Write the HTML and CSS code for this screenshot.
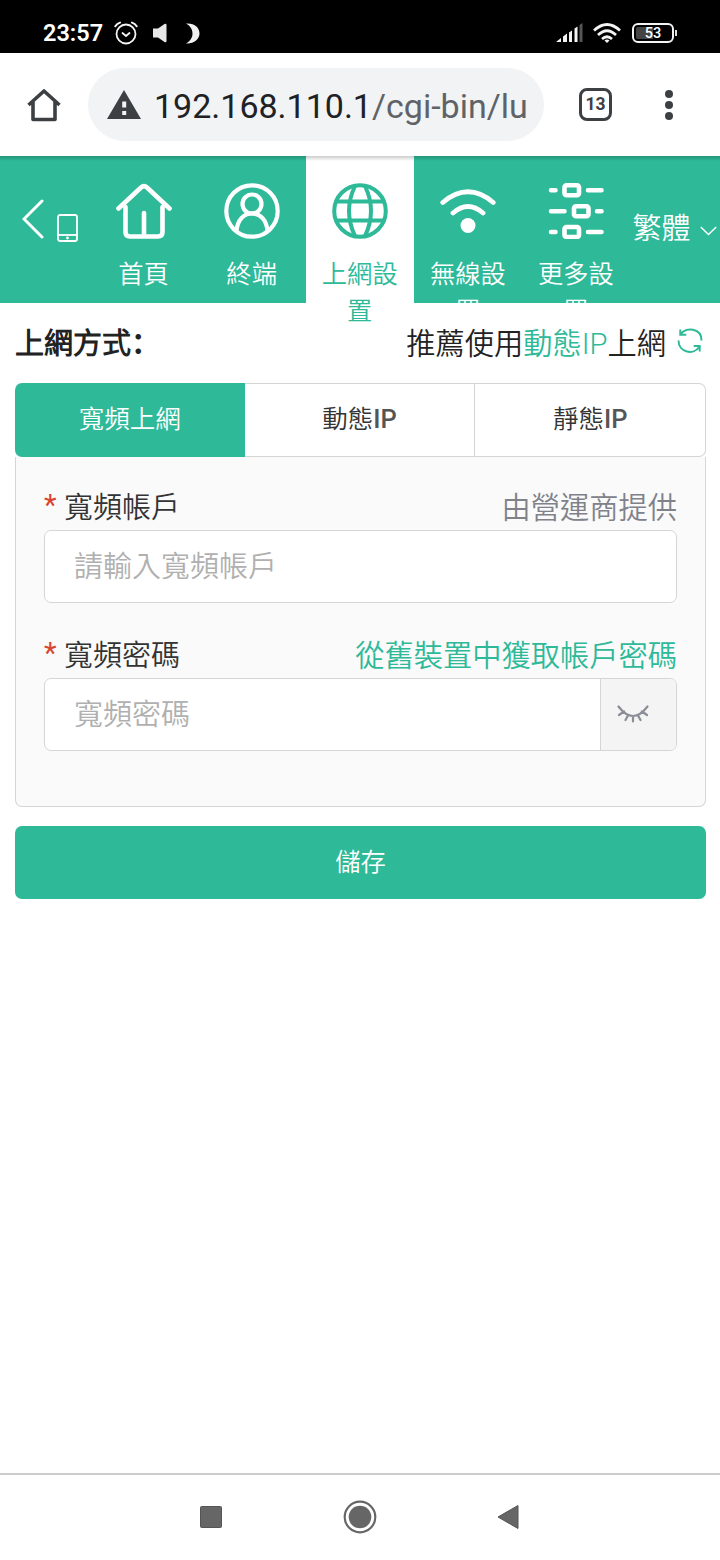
FILE: index.html
```html
<!DOCTYPE html>
<html lang="zh-Hant">
<head>
    <meta charset="UTF-8">
    <meta name="viewport" content="width=device-width, initial-scale=1.0">
    <title>上網設置</title>
    <link rel="stylesheet" href="styles.css">
</head>
<body>

    <div class="statusbar">
        <span class="clock">23:57</span>
        <svg class="alarm" width="24" height="24" viewBox="0 0 24 24" fill="none" stroke="#f4f4f4" stroke-width="1.8" stroke-linecap="round">
            <circle cx="12" cy="13" r="9.5"/>
            <path d="M8.5 12l3.5 3 3.5-3"/>
            <path d="M1.3 5.2Q3 2.5 6 1.6M22.7 5.2Q21 2.5 18 1.6" stroke-width="2"/>
        </svg>
        <svg class="sound" width="14" height="20" viewBox="0 0 14 20" fill="#e8e8e8"><path d="M0 5.500h5L11.500 1Q13.500 0 13.500 2v16q0 2-2 1L5 14.500H0z"/></svg>
        <svg class="moon" width="14" height="21" viewBox="0 0 14 21" fill="#f0f0f0"><path d="M0 .5C9 0 13.500 5 13.500 10.500S8 21 0 20.500C4.500 18 6.500 14.500 6.500 10.500S4.500 3 0 .5z"/></svg>
        <span class="spacer"></span>
        <svg class="signal" width="27" height="20" viewBox="0 0 27 20" fill="#f4f4f4">
            <path d="M0 19l5-4v4zM7 13.500l4-3V19H7zM13 9.500l3-2V19h-3zM18.500 5.500l3-2V19h-3z"/>
            <path d="M23.500 2l3-2v19h-3z" fill="#555"/>
        </svg>
        <svg class="wifi" width="28" height="20" viewBox="0 0 28 20" fill="none" stroke="#f4f4f4" stroke-width="2.7">
            <path d="M1 7.500Q14-4.500 27 7.500M5 12q9-8.500 18 0M9 16q5-4.500 10 0"/>
            <path d="M11.500 17.500q2.500-2 5 0L14 20z" fill="#f4f4f4" stroke="none"/>
        </svg>
        <div class="battery"><span>53</span></div>
    </div>

    <div class="browser">
        <svg class="home" width="34" height="34" viewBox="0 0 34 34" fill="none" stroke="#3c4043" stroke-width="3.600" stroke-linejoin="round">
            <path d="M1.500 17L17 3l15.500 14M6 14v17.500h22V14"/>
        </svg>
        <div class="url">
            <svg width="34" height="29" viewBox="0 0 34 29"><path d="M17 0l17 29H0z" fill="#3c4043"/><path d="M15.200 11.500h4v6h-4zM15.200 21h4v4h-4z" fill="#f1f3f4"/></svg>
            <span class="address">192.168.110.1<span class="path">/cgi-bin/lu</span></span>
        </div>
        <div class="tabcount">13</div>
        <svg class="dots" width="8" height="30" viewBox="0 0 8 30" fill="#3c4043"><circle cx="4" cy="4" r="4"/><circle cx="4" cy="15" r="4"/><circle cx="4" cy="26" r="4"/></svg>
    </div>

    <div class="nav">
        <div class="back">
            <svg width="22" height="40" viewBox="0 0 22 40" fill="none" stroke="#fff" stroke-width="3" stroke-linecap="round"><path d="M20 2L2 20l18 18"/></svg>
            <svg class="phone" width="21" height="28" viewBox="0 0 21 28" fill="none" stroke="#fff" stroke-width="1.800"><rect x="1" y="1" width="19" height="26" rx="2"/><path d="M1 21h19"/><circle cx="10.500" cy="24" r="1.400" fill="#fff" stroke="none"/></svg>
        </div>
        <div class="nav-item">
            <svg width="56" height="56" viewBox="0 0 56 56" fill="none" stroke="currentColor" stroke-width="4.600" stroke-linecap="round" stroke-linejoin="round">
                <path d="M2.500 25.500L25 4.500q3-2.800 6 0l22.500 21"/>
                <path d="M9.500 24v25q0 4.500 4.500 4.500h28q4.500 0 4.500-4.500V24M28 30v23"/>
            </svg>
            <span>首頁</span>
        </div>
        <div class="nav-item">
            <svg width="56" height="56" viewBox="0 0 56 56" fill="none" stroke="currentColor" stroke-width="4.200">
                <circle cx="28" cy="28" r="25.700"/>
                <circle cx="28" cy="21" r="9.500"/>
                <path d="M12.500 48C13.500 37 19.500 30.500 28 30.500S42.500 37 43.500 48"/>
            </svg>
            <span>終端</span>
        </div>
        <div class="nav-item active">
            <svg width="56" height="56" viewBox="0 0 56 56" fill="none" stroke="currentColor" stroke-width="4">
                <circle cx="28" cy="28" r="25.800"/>
                <path d="M23 3Q11 28 23 53M33 3q12 25 0 50M5 18.500h46M5 37.500h46"/>
            </svg>
            <span>上網設置</span>
        </div>
        <div class="nav-item">
            <svg width="56" height="56" viewBox="0 0 56 56" fill="none" stroke="currentColor" stroke-width="4.800" stroke-linecap="round">
                <path d="M2.800 19.500Q28-1.800 53.200 19.500M13 30q15-13 30 0"/>
                <circle cx="28" cy="42.500" r="7.500" fill="currentColor" stroke="none"/>
            </svg>
            <span>無線設置</span>
        </div>
        <div class="nav-item">
            <svg width="56" height="56" viewBox="0 0 56 56" fill="none" stroke="currentColor" stroke-width="4.600" stroke-linecap="round">
                <rect x="16.500" y="2.300" width="14.500" height="10" rx="2"/>
                <rect x="26" y="23.300" width="14.500" height="10" rx="2"/>
                <rect x="16.500" y="44" width="14.500" height="10" rx="2"/>
                <path d="M3 7.300h4.500M40 7.300h13.500M3 28.300h13.500M49 28.300h4.500M3 49h4.500M40 49h13.500"/>
            </svg>
            <span>更多設置</span>
        </div>
        <div class="lang">
            <span>繁體</span>
            <svg width="17" height="10" viewBox="0 0 17 10" fill="none" stroke="#fff" stroke-width="1.500"><path d="M.8 1l7.700 7.500L16.200 1"/></svg>
        </div>
    </div>

    <div class="content">
        <div class="title">
            <b>上網方式<span class="colon" lang="zh-Hans">：</span></b>
            <span class="recommend">推薦使用<a>動態IP</a>上網</span>
            <svg class="refresh" width="26" height="26" viewBox="0 0 26 26" fill="none" stroke="#2eb998" stroke-width="2">
                <path d="M3.500 6.500C9-1.500 24.500 0 24.500 12.500M3.300 1.500v5.300h6M1.500 12.500C1.500 25 17 27.500 22.500 18.500M16.700 18h6v5.500"/>
            </svg>
        </div>

        <div class="tabs">
            <div class="tab selected">寬頻上網</div>
            <div class="tab">動態<span class="ip">IP</span></div>
            <div class="tab">靜態<span class="ip">IP</span></div>
        </div>

        <div class="panel">
            <div class="label">
                <i>*</i><label for="account">寬頻帳戶</label>
                <span class="hint">由營運商提供</span>
            </div>
            <div class="field">
                <input type="text" id="account" placeholder="請輸入寬頻帳戶">
            </div>

            <div class="label">
                <i>*</i><label for="password">寬頻密碼</label>
                <a class="hint">從舊裝置中獲取帳戶密碼</a>
            </div>
            <div class="field">
                <input type="password" id="password" placeholder="寬頻密碼">
                <button class="eye">
                    <svg width="32" height="18" viewBox="0 0 32 18" fill="none" stroke="#8b8e96" stroke-width="2.200" stroke-linecap="round"><path d="M1.500 1.500q14.500 19 29 0M2 10l5-3.500M30 10l-5-3.500M11 10.500L8.500 15M16 11v5.500M21 10.500l2.500 4.500"/></svg>
                </button>
            </div>
        </div>

        <button class="save">儲存</button>
    </div>

    <div class="softkeys">
        <svg width="22" height="22" viewBox="0 0 22 22"><rect x=".5" y=".5" width="21" height="21" rx="1" fill="#666" stroke="#555"/></svg>
        <svg width="34" height="34" viewBox="0 0 34 34"><circle cx="17" cy="17" r="15.300" fill="none" stroke="#666" stroke-width="2.200"/><circle cx="17" cy="17" r="11.300" fill="#666"/></svg>
        <svg width="22" height="26" viewBox="0 0 22 26"><path d="M0 13L20 1.500v23z" fill="#666" stroke="#555" stroke-linejoin="round"/></svg>
    </div>

</body>
</html>
```
FILE: styles.css
```css
* {
    box-sizing: border-box;
}
body {
    margin: 0;
    height: 1560px;
    display: flex;
    flex-direction: column;
    background: #fff;
    color: #222;
    font-family: Roboto, "Noto Sans CJK TC DemiLight", "Noto Sans CJK TC", sans-serif;
    font-size: 29px;
    font-weight: 350;
    overflow: hidden;
}
svg {
    display: block;
    flex: none;
}

/* phone status bar */
.statusbar {
    height: 53px;
    padding: 13px 46px 0 43px;
    display: flex;
    align-items: center;
    background: #000;
    color: #fff;
}
.clock {
    width: 71px;
    font-size: 23.5px;
    font-weight: 600;
}
.sound {
    margin-left: 15px;
}
.moon {
    margin-left: 19px;
}
.spacer {
    flex: 1;
}
.wifi {
    margin: 0 11px 0 10px;
}
.battery {
    width: 42px;
    height: 20px;
    border: 2px solid #f4f4f4;
    border-radius: 6px;
    position: relative;
    display: flex;
    align-items: center;
    justify-content: center;
    background: linear-gradient(90deg, #444 50%, #000 50%);
    background-clip: content-box;
    padding: 2px;
    font-size: 14.5px;
    font-weight: 500;
}
.battery::after {
    content: "";
    position: absolute;
    right: -5px;
    top: 5px;
    width: 2px;
    height: 6px;
    background: #ddd;
}

/* browser toolbar */
.browser {
    height: 103px;
    padding-left: 27px;
    display: flex;
    align-items: center;
}
.url {
    width: 456px;
    height: 73px;
    margin-left: 27px;
    padding-left: 19px;
    display: flex;
    align-items: center;
    border-radius: 37px;
    background: #f1f3f4;
    white-space: nowrap;
}
.address {
    margin: 3px 0 0 13px;
    font-size: 34px;
    font-weight: 400;
    color: #202124;
}
.path {
    color: #5f6368;
}
.tabcount {
    width: 33px;
    height: 33px;
    margin-left: 35px;
    border: 3.5px solid #3c4043;
    border-radius: 8px;
    color: #3c4043;
    font-size: 17.5px;
    font-weight: 700;
    line-height: 27px;
    text-align: center;
}
.dots {
    margin-left: 53px;
}

/* router menu */
.nav {
    height: 147px;
    display: flex;
    background: linear-gradient(rgba(0, 0, 0, 0.2), rgba(0, 0, 0, 0) 5px), #2eb998;
    color: #fff;
}
.back {
    width: 90px;
    padding: 43px 0 0 22px;
    display: flex;
    align-items: flex-start;
}
.phone {
    margin: 15px 0 0 13px;
}
.nav-item {
    width: 108.1px;
    padding: 27px 14px 0;
    display: flex;
    flex-direction: column;
    align-items: center;
    font-size: 25.3px;
    line-height: 36.5px;
    text-align: center;
}
.nav-item svg {
    margin-left: -1px;
}
.nav-item span {
    width: 80px;
    margin: 18px 0 0 -1px;
    word-break: break-all;
}
.nav-item.active {
    background: linear-gradient(rgba(0, 0, 0, 0.2), rgba(0, 0, 0, 0) 5px), #fff;
    color: #2eb998;
}
.lang {
    flex: 1;
    padding: 52px 0 0 2px;
    display: flex;
    align-items: flex-start;
    line-height: 42px;
    white-space: nowrap;
}
.lang svg {
    margin: 18px 0 0 10px;
}

/* settings form */
.content {
    flex: 1;
    padding: 0 14px 0 15px;
}
.title {
    height: 80px;
    padding-bottom: 4px;
    display: flex;
    align-items: center;
}
.title b {
    font-weight: 700;
    flex: 1;
}
.colon {
    font-family: "Noto Sans CJK SC", sans-serif;
}
.recommend, .hint {
    font-size: 29.25px;
}
.recommend a, .label a {
    color: #2eb998;
}
.refresh {
    margin: 0 3px 1px 11px;
}
.tabs {
    height: 74px;
    display: flex;
}
.tab {
    flex: 1;
    border: 1.5px solid #d5d5d5;
    border-left: 0;
    color: #333;
    font-size: 25.5px;
    line-height: 70px;
    text-align: center;
}
.tab:last-child {
    border-radius: 0 7px 7px 0;
}
.tab.selected {
    border: 0;
    border-radius: 7px 0 0 7px;
    background: #2eb998;
    color: #fff;
    line-height: 72px;
}
.ip {
    font-weight: 500;
    color: #555;
}
.panel {
    height: 350px;
    padding: 29px 28px 0;
    border: 1px solid #d5d5d5;
    border-top: 0;
    border-radius: 0 0 7px 7px;
    background: #fafafa;
}
.label {
    height: 44px;
    padding-bottom: 7px;
    display: flex;
    align-items: center;
    color: #333;
}
.label i {
    width: 20px;
    color: #d9432f;
    font-style: normal;
    font-weight: 400;
}
.hint {
    margin-left: auto;
    color: #80828a;
}
.field {
    height: 73px;
    margin-bottom: 31px;
    display: flex;
    border: 1.5px solid #d5d5d5;
    border-radius: 7px;
    background: #fff;
    overflow: hidden;
}
.field input {
    flex: 1;
    min-width: 0;
    padding: 0 29px;
    border: 0;
    outline: none;
    background: none;
    font: inherit;
}
.field input::placeholder {
    color: #b0b0b0;
}
.eye {
    width: 76px;
    padding: 0 0 2px 16px;
    border: 0;
    border-left: 1px solid #d5d5d5;
    background: #f4f4f4;
}
.save {
    display: block;
    width: 100%;
    height: 73px;
    margin-top: 19px;
    padding: 0 0 5px;
    border: 0;
    border-radius: 7px;
    background: #2eb998;
    color: #fff;
    font: inherit;
    font-size: 25.3px;
}

/* android buttons */
.softkeys {
    height: 87px;
    padding: 0 200px 2px;
    display: flex;
    align-items: center;
    justify-content: space-between;
    border-top: 2px solid #ccc;
}
```
